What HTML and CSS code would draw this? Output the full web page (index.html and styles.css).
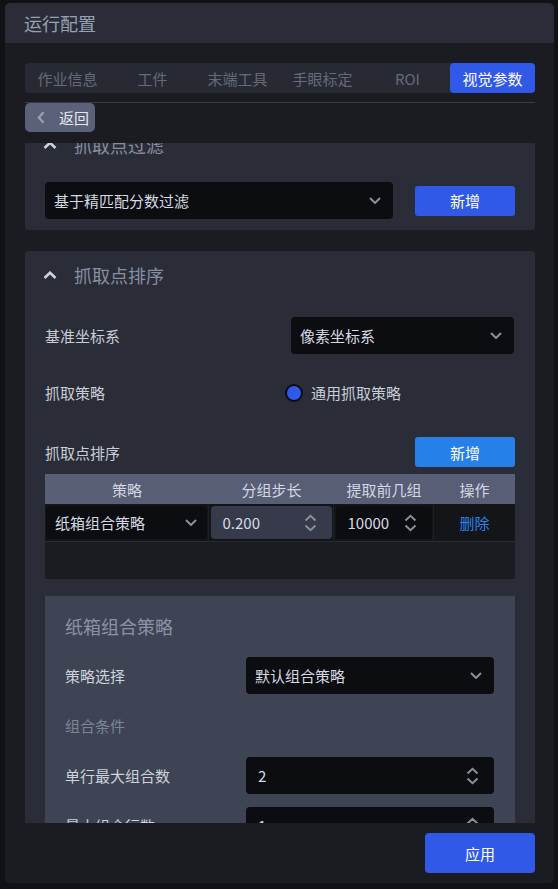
FILE: index.html
```html
<!DOCTYPE html>
<html lang="zh-CN">
<head>
<meta charset="utf-8">
<title>运行配置</title>
<link rel="stylesheet" href="styles.css">
</head>
<body>
<div class="dialog">
  <div class="dlg-header">运行配置</div>
  <div class="dlg-body">
    <div class="tabs">
      <div class="tab">作业信息</div>
      <div class="tab">工件</div>
      <div class="tab">末端工具</div>
      <div class="tab">手眼标定</div>
      <div class="tab">ROI</div>
      <div class="tab active">视觉参数</div>
    </div>
    <div class="divider"></div>
    <div class="back">
      <svg width="8" height="13" viewBox="0 0 8 13"><path d="M6.5 1.2L1.8 6.5l4.7 5.3" stroke="#9ba1b2" stroke-width="2.2" fill="none"/></svg>
      <span>返回</span>
    </div>
    <div class="scroller">
      <div class="scroll-content">
        <section class="card card-filter">
          <div class="card-head">
            <svg class="up" width="14" height="8" viewBox="0 0 14 8"><path d="M1.5 7L7 1.7 12.5 7" stroke="#cdd1da" stroke-width="2.6" fill="none"/></svg>
            <span>抓取点过滤</span>
          </div>
          <div class="filter-row">
            <div class="select wide"><span>基于精匹配分数过滤</span><svg width="12" height="7" viewBox="0 0 12 7"><path d="M1 1l5 5 5-5" stroke="#8a8f9c" stroke-width="2" fill="none"/></svg></div>
            <div class="btn btn-blue">新增</div>
          </div>
        </section>

        <section class="card card-sort">
          <div class="card-head">
            <svg class="up" width="14" height="8" viewBox="0 0 14 8"><path d="M1.5 7L7 1.7 12.5 7" stroke="#cdd1da" stroke-width="2.6" fill="none"/></svg>
            <span>抓取点排序</span>
          </div>
          <div class="form-row row-coord">
            <span class="label">基准坐标系</span>
            <div class="select coord"><span>像素坐标系</span><svg width="12" height="7" viewBox="0 0 12 7"><path d="M1 1l5 5 5-5" stroke="#8a8f9c" stroke-width="2" fill="none"/></svg></div>
          </div>
          <div class="form-row row-radio">
            <span class="label label-wide">抓取策略</span>
            <span class="radio"></span>
            <span class="radio-text">通用抓取策略</span>
          </div>
          <div class="form-row row-add">
            <span class="label">抓取点排序</span>
            <div class="btn btn-sky">新增</div>
          </div>
          <div class="table">
            <div class="th">策略</div>
            <div class="th">分组步长</div>
            <div class="th">提取前几组</div>
            <div class="th">操作</div>
            <div class="td td-sel">
              <div class="select cell-select"><span>纸箱组合策略</span><svg width="12" height="7" viewBox="0 0 12 7"><path d="M1 1l5 5 5-5" stroke="#8a8f9c" stroke-width="2" fill="none"/></svg></div>
            </div>
            <div class="td">
              <div class="num cell-num light"><span>0.200</span><svg width="13" height="18" viewBox="0 0 13 18"><path d="M1.5 6.5L6.5 1.8l5 4.7M1.5 11.5l5 4.7 5-4.7" stroke="#8a8f9c" stroke-width="2" fill="none"/></svg></div>
            </div>
            <div class="td">
              <div class="num cell-num"><span>10000</span><svg width="13" height="18" viewBox="0 0 13 18"><path d="M1.5 6.5L6.5 1.8l5 4.7M1.5 11.5l5 4.7 5-4.7" stroke="#8a8f9c" stroke-width="2" fill="none"/></svg></div>
            </div>
            <div class="td td-op"><span class="link">删除</span></div>
            <div class="tbody-empty"></div>
          </div>

          <div class="subpanel">
            <div class="sub-title">纸箱组合策略</div>
            <div class="sub-row sub-first">
              <span class="sub-label">策略选择</span>
              <div class="select sub-ctrl"><span>默认组合策略</span><svg width="12" height="7" viewBox="0 0 12 7"><path d="M1 1l5 5 5-5" stroke="#8a8f9c" stroke-width="2" fill="none"/></svg></div>
            </div>
            <div class="sub-section">组合条件</div>
            <div class="sub-row sub-num1">
              <span class="sub-label">单行最大组合数</span>
              <div class="num sub-ctrl"><span>2</span><svg width="13" height="18" viewBox="0 0 13 18"><path d="M1.5 6.5L6.5 1.8l5 4.7M1.5 11.5l5 4.7 5-4.7" stroke="#8a8f9c" stroke-width="2" fill="none"/></svg></div>
            </div>
            <div class="sub-row sub-num2">
              <span class="sub-label">最大组合行数</span>
              <div class="num sub-ctrl"><span>1</span><svg width="13" height="18" viewBox="0 0 13 18"><path d="M1.5 6.5L6.5 1.8l5 4.7M1.5 11.5l5 4.7 5-4.7" stroke="#8a8f9c" stroke-width="2" fill="none"/></svg></div>
            </div>
          </div>
        </section>
      </div>
    </div>
  </div>
  <div class="dlg-footer">
    <div class="btn btn-apply">应用</div>
  </div>
</div>
</body>
</html>
```

FILE: styles.css
```css
html, body {
  margin: 0;
  padding: 0;
  background: #111216;
}
body {
  font-family: "Noto Sans CJK SC", "Noto Sans", sans-serif;
  font-size: 15px;
  color: #cdd2dc;
  padding: 3px 0 0 5px;
}
.dialog {
  width: 549px;
  height: 880px;
  background: #1b1c21;
  border-radius: 5px;
  display: flex;
  flex-direction: column;
  overflow: hidden;
}
.dlg-header {
  flex: none;
  height: 40px;
  line-height: 40px;
  background: #2a2d37;
  color: #98a1b3;
  font-size: 18px;
  padding-left: 19px;
}
.dlg-body {
  flex: 1;
  min-height: 0;
  display: flex;
  flex-direction: column;
  padding: 20px 19px 0 20px;
}
.tabs {
  flex: none;
  display: flex;
  height: 30px;
  background: #282a33;
  border-radius: 4px;
}
.tab {
  flex: 1;
  display: flex;
  align-items: center;
  justify-content: center;
  color: #646a79;
  font-size: 15px;
}
.tab.active {
  background: #3159e8;
  color: #ffffff;
  border-radius: 4px;
}
.divider {
  flex: none;
  height: 1px;
  background: #383a44;
  margin-top: 9px;
}
.back {
  flex: none;
  align-self: flex-start;
  width: 70px;
  height: 29px;
  box-sizing: border-box;
  background: #5b6178;
  border-radius: 5px;
  display: flex;
  align-items: center;
  padding-left: 12px;
  gap: 14px;
  color: #e4e8ef;
  font-size: 15px;
}
.scroller {
  flex: 1;
  min-height: 0;
  overflow: hidden;
  margin-top: 11px;
}
.scroll-content {
  margin-top: -22px;
  display: flex;
  flex-direction: column;
  gap: 21px;
}
.card {
  background: #2a2d37;
  border-radius: 4px;
  padding: 0 20px;
}
.card-filter {
  padding-bottom: 11px;
}
.card-head {
  height: 48px;
  display: flex;
  align-items: center;
  color: #868fa2;
  font-size: 18px;
}
.card-head .up {
  margin-left: -2px;
  margin-right: 17px;
}
.filter-row {
  margin-top: 13px;
  display: flex;
  align-items: center;
  justify-content: space-between;
}
.select, .num {
  box-sizing: border-box;
  height: 37px;
  background: #0c0d11;
  border-radius: 4px;
  display: flex;
  align-items: center;
  justify-content: space-between;
  padding: 0 12px 0 9px;
  color: #d6dae3;
  font-size: 15px;
}
.num {
  padding: 0 15px 0 12px;
}
.select.wide {
  width: 348px;
}
.btn {
  display: flex;
  align-items: center;
  justify-content: center;
  color: #ffffff;
  border-radius: 3px;
  font-size: 15px;
}
.btn-blue {
  width: 100px;
  height: 30px;
  background: #3159e8;
}
.btn-sky {
  width: 100px;
  height: 30px;
  background: #2680e9;
}
.form-row {
  display: flex;
  align-items: center;
}
.row-coord {
  margin-top: 18px;
  height: 37px;
  justify-content: space-between;
}
.select.coord {
  width: 223px;
  margin-right: 1px;
  padding-right: 12px;
}
.row-radio {
  margin-top: 20px;
  height: 37px;
}
.label {
  color: #c9ced8;
}
.label-wide {
  width: 240px;
}
.radio {
  width: 14px;
  height: 14px;
  border-radius: 50%;
  background: #3159e8;
  border: 2px solid #0c0d11;
}
.radio-text {
  margin-left: 8px;
  color: #c9ced8;
}
.row-add {
  margin-top: 26px;
  height: 30px;
  justify-content: space-between;
}
.table {
  margin-top: 7px;
  display: grid;
  grid-template-columns: 164px 125px 100px 81px;
}
.th {
  height: 30px;
  background: #585e76;
  color: #d3d7e0;
  display: flex;
  align-items: center;
  justify-content: center;
}
.td {
  height: 37px;
  background: #141519;
  border-bottom: 1px solid #292b32;
  border-right: 1px solid #1f2026;
  box-sizing: content-box;
  display: flex;
  align-items: center;
  padding: 0 1px 0 1px;
}
.td-sel {
  padding-left: 1px;
  padding-right: 1px;
}
.td-op {
  border-right: none;
  justify-content: center;
  padding: 0;
}
.cell-select {
  width: 161px;
  height: 33px;
  padding-right: 10px;
}
.cell-num {
  width: 121px;
  height: 33px;
  margin: 0 auto;
}
.td:nth-child(7) .cell-num {
  width: 96px;
}
.num.light {
  background: #363a4a;
}
.link {
  color: #2b84ec;
}
.tbody-empty {
  grid-column: 1 / -1;
  height: 37px;
  background: #1b1c21;
}
.subpanel {
  margin-top: 17px;
  background: #3f4454;
  padding: 18px 21px 20px 20px;
}
.sub-title {
  font-size: 18px;
  line-height: 24px;
  color: #8a93a6;
}
.sub-row {
  display: flex;
  align-items: center;
  justify-content: space-between;
}
.sub-first {
  margin-top: 19px;
}
.sub-label {
  color: #cdd2dc;
}
.sub-ctrl {
  width: 248px;
}
.sub-section {
  margin-top: 21px;
  line-height: 22px;
  color: #7c8496;
}
.sub-num1 {
  margin-top: 20px;
}
.sub-num2 {
  margin-top: 13px;
}
.dlg-footer {
  flex: none;
  height: 60px;
  box-sizing: border-box;
  padding: 10px 19px 10px 0;
  display: flex;
  justify-content: flex-end;
  background: #1b1c21;
}
.btn-apply {
  width: 110px;
  height: 40px;
  background: #3159e8;
  border-radius: 4px;
}
```
